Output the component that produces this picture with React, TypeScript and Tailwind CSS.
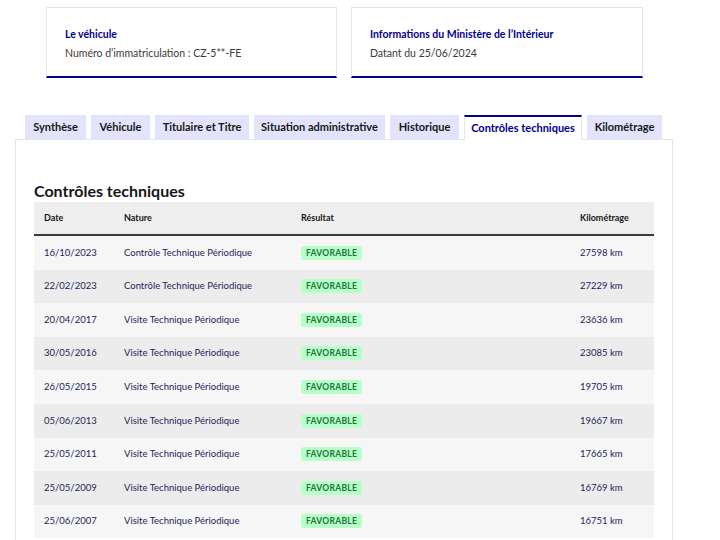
import React from "react";

const rows = [
  ["16/10/2023", "Contrôle Technique Périodique", "27598 km"],
  ["22/02/2023", "Contrôle Technique Périodique", "27229 km"],
  ["20/04/2017", "Visite Technique Périodique", "23636 km"],
  ["30/05/2016", "Visite Technique Périodique", "23085 km"],
  ["26/05/2015", "Visite Technique Périodique", "19705 km"],
  ["05/06/2013", "Visite Technique Périodique", "19667 km"],
  ["25/05/2011", "Visite Technique Périodique", "17665 km"],
  ["25/05/2009", "Visite Technique Périodique", "16769 km"],
  ["25/06/2007", "Visite Technique Périodique", "16751 km"],
];

const tabs: { label: string; w: string; active?: boolean }[] = [
  { label: "Synthèse", w: "w-[61px]" },
  { label: "Véhicule", w: "w-[59px]" },
  { label: "Titulaire et Titre", w: "w-[94px]" },
  { label: "Situation administrative", w: "w-[131px]" },
  { label: "Historique", w: "w-[69px]" },
  { label: "Contrôles techniques", w: "w-[118px]", active: true },
  { label: "Kilométrage", w: "w-[75px]" },
];

export default function App() {
  return (
    <div className="w-[720px] h-[540px] overflow-hidden bg-white font-['Lato',sans-serif] text-[#161616]">
      <div className="w-[688px]">
        <div className="flex gap-[14px] pl-[46px] pt-[7px]">
          <div className="w-[291px] h-[71px] border border-[#e5e5e5] border-b-[2px] border-b-[#000091] pl-[18px] pt-[18px]">
            <div className="text-[10.5px] font-bold text-[#000091] leading-[16px]">Le véhicule</div>
            <div className="text-[10.5px] text-[#3a3a3a] leading-[16px] mt-[3px]">Numéro d’immatriculation : CZ-5**-FE</div>
          </div>
          <div className="w-[292px] h-[71px] border border-[#e5e5e5] border-b-[2px] border-b-[#000091] pl-[18px] pt-[18px]">
            <div className="text-[10.5px] font-bold text-[#000091] leading-[16px]">Informations du Ministère de l’Intérieur</div>
            <div className="text-[10.5px] text-[#3a3a3a] leading-[16px] mt-[3px]">Datant du 25/06/2024</div>
          </div>
        </div>

        <div className="mt-[37px] ml-[15px] w-[658px]">
          <div className="flex gap-[5px] pl-[10px] relative z-10">
            {tabs.map((t) =>
              t.active ? (
                <div
                  key={t.label}
                  className={
                    t.w +
                    " h-[25px] flex items-center justify-center bg-white border-t-2 border-[#000091] border-x border-x-[#e5e5e5] text-[11px] font-bold text-[#000091] whitespace-nowrap"
                  }
                >
                  {t.label}
                </div>
              ) : (
                <div
                  key={t.label}
                  className={
                    t.w +
                    " h-[24px] flex items-center justify-center bg-[#e3e3fd] text-[11px] font-bold text-[#161616] whitespace-nowrap"
                  }
                >
                  {t.label}
                </div>
              )
            )}
          </div>
          <div className="-mt-px border border-[#e5e5e5] h-[420px] px-[18px] pt-[41px]">
            <h2 className="text-[16px] font-bold leading-[20px] text-[#161616]">Contrôles techniques</h2>
            <div className="w-[620px] mt-[1px]">
              <div className="flex items-center h-[34px] bg-[#eeeeee] border-b-2 border-[#3a3a3a] text-[9px] font-bold text-[#161616]">
                <div className="w-[80px] pl-[10px]">Date</div>
                <div className="w-[177px] pl-[10px]">Nature</div>
                <div className="w-[279px] pl-[10px]">Résultat</div>
                <div className="w-[84px] pl-[10px]">Kilométrage</div>
              </div>
              {rows.map((r, i) => (
                <div
                  key={i}
                  className={
                    "flex items-center h-[33.6px] text-[9.5px] text-[#1e1e5a] " +
                    (i % 2 === 0 ? "bg-[#f6f6f6]" : "bg-[#ececec]")
                  }
                >
                  <div className="w-[80px] pl-[10px]">{r[0]}</div>
                  <div className="w-[177px] pl-[10px]">{r[1]}</div>
                  <div className="w-[279px] pl-[10px]">
                    <span className="inline-block bg-[#b8fec9] text-[#18753c] font-bold text-[8.5px] leading-[14px] px-[5px] rounded-[3px] tracking-[0.3px]">
                      FAVORABLE
                    </span>
                  </div>
                  <div className="w-[84px] pl-[10px]">{r[2]}</div>
                </div>
              ))}
            </div>
          </div>
        </div>
      </div>
    </div>
  );
}
